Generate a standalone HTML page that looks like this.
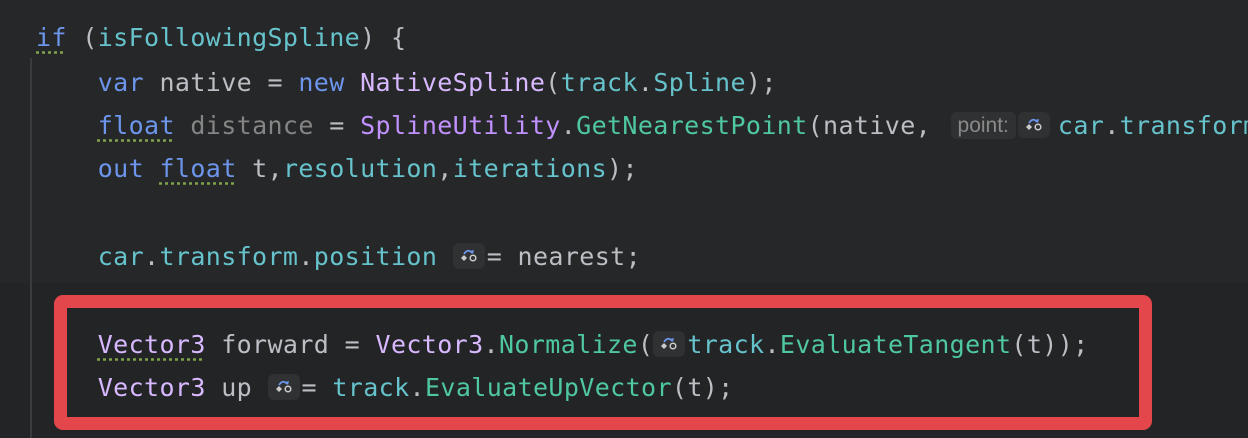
<html><head><style>
body{margin:0;width:1248px;height:438px;overflow:hidden;background:#222426;position:relative;font-family:"DejaVu Sans Mono","Liberation Mono",monospace;}
.top{position:absolute;left:0;top:0;width:1248px;height:283px;background:#262728;}
.guide{position:absolute;left:30px;top:58px;width:2px;height:380px;background:#3a3b3c;}
.l{position:absolute;left:36px;font-size:25px;letter-spacing:0.38px;white-space:pre;color:#bcbec4;line-height:30px;}
.k{color:#6c95eb}.c{color:#66c3cc}.p{color:#c191ff}.t{color:#d8b8ff}.m{color:#4fc7a0}.g{color:#858585}
.u{text-decoration:underline dotted #7fa34a;text-underline-offset:5px}
.hint{display:inline-block;background:#303132;border-radius:5px;color:#8a8a8a;font-family:"Liberation Sans",sans-serif;font-size:21px;line-height:27px;padding:0 7px;vertical-align:2px;letter-spacing:0;margin-left:4px;margin-right:2px}
.ic{display:inline-block;background:#303132;border-radius:6px;width:32px;height:26px;vertical-align:-4px;position:relative;margin-right:2px}
.ic2{margin-right:8px}
.box{position:absolute;left:54px;top:295px;width:1072px;height:109px;border:13px solid #e3474c;border-radius:9px;}
</style></head><body>
<div class="top"></div><div class="guide"></div>
<div class="l" style="top:23px"><span class="k u">if</span> (<span class="c">isFollowingSpline</span>) {</div>
<div class="l" style="top:68px">    <span class="k">var</span> native = <span class="k">new</span> <span class="t">NativeSpline</span>(<span class="c">track</span>.<span class="c">Spline</span>);</div>
<div class="l" style="top:111px">    <span class="k u">float</span> <span class="g">distance</span> = <span class="p">SplineUtility</span>.<span class="m">GetNearestPoint</span>(native, <span class="hint">point:</span><span class="ic ic2"><svg width="32" height="26"><path d="M11 11 Q15 5 19 10" stroke="#6c95eb" stroke-width="1.8" fill="none"/><path d="M17 8 l3 3 l1-4z" fill="#6c95eb"/><path d="M8 15 l3-3 l3 3 l-3 3z" fill="#ccc"/><circle cx="20" cy="15" r="2.8" stroke="#ccc" stroke-width="1.5" fill="none"/></svg></span><span class="c">car</span>.<span class="c">transform</span></div>
<div class="l" style="top:154px">    <span class="k">out</span> <span class="k u">float</span> t,<span class="c">resolution</span>,<span class="c">iterations</span>);</div>
<div class="l" style="top:242px">    <span class="c">car</span>.<span class="c">transform</span>.<span class="c">position</span> <span class="ic"><svg width="32" height="26"><path d="M11 11 Q15 5 19 10" stroke="#6c95eb" stroke-width="1.8" fill="none"/><path d="M17 8 l3 3 l1-4z" fill="#6c95eb"/><path d="M8 15 l3-3 l3 3 l-3 3z" fill="#ccc"/><circle cx="20" cy="15" r="2.8" stroke="#ccc" stroke-width="1.5" fill="none"/></svg></span>= nearest;</div>
<div class="box"></div>
<div class="l" style="top:330px">    <span class="t u">Vector3</span> forward = <span class="t">Vector3</span>.<span class="m">Normalize</span>(<span class="ic"><svg width="32" height="26"><path d="M11 11 Q15 5 19 10" stroke="#6c95eb" stroke-width="1.8" fill="none"/><path d="M17 8 l3 3 l1-4z" fill="#6c95eb"/><path d="M8 15 l3-3 l3 3 l-3 3z" fill="#ccc"/><circle cx="20" cy="15" r="2.8" stroke="#ccc" stroke-width="1.5" fill="none"/></svg></span><span class="c">track</span>.<span class="m">EvaluateTangent</span>(t));</div>
<div class="l" style="top:373px">    <span class="t">Vector3</span> up <span class="ic"><svg width="32" height="26"><path d="M11 11 Q15 5 19 10" stroke="#6c95eb" stroke-width="1.8" fill="none"/><path d="M17 8 l3 3 l1-4z" fill="#6c95eb"/><path d="M8 15 l3-3 l3 3 l-3 3z" fill="#ccc"/><circle cx="20" cy="15" r="2.8" stroke="#ccc" stroke-width="1.5" fill="none"/></svg></span>= <span class="c">track</span>.<span class="m">EvaluateUpVector</span>(t);</div>
</body></html>
